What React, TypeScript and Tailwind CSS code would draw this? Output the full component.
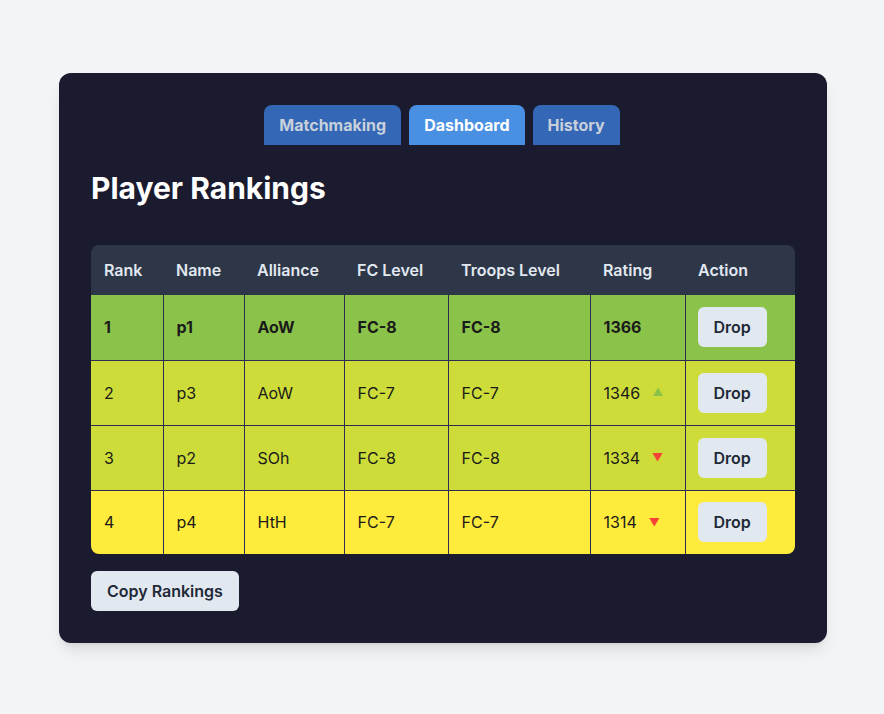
import React from "react";

type Row = {
  rank: number;
  name: string;
  alliance: string;
  fc: string;
  troops: string;
  rating: number;
  trend: "up" | "down" | null;
  bg: string;
  bold?: boolean;
};

const rows: Row[] = [
  { rank: 1, name: "p1", alliance: "AoW", fc: "FC-8", troops: "FC-8", rating: 1366, trend: null, bg: "bg-[#8bc34a]", bold: true },
  { rank: 2, name: "p3", alliance: "AoW", fc: "FC-7", troops: "FC-7", rating: 1346, trend: "up", bg: "bg-[#cddc39]" },
  { rank: 3, name: "p2", alliance: "SOh", fc: "FC-8", troops: "FC-8", rating: 1334, trend: "down", bg: "bg-[#cddc39]" },
  { rank: 4, name: "p4", alliance: "HtH", fc: "FC-7", troops: "FC-7", rating: 1314, trend: "down", bg: "bg-[#ffeb3b]" },
];

const cols = ["Rank", "Name", "Alliance", "FC Level", "Troops Level", "Rating", "Action"];
const widths = ["w-[72px]", "w-[81px]", "w-[100px]", "w-[104px]", "w-[142px]", "w-[95px]", "w-[110px]"];

export default function App() {
  return (
    <div className="min-h-[714px] w-full bg-[#f3f4f6] flex justify-center pt-[73px]" style={{ fontFamily: "Inter, 'Noto Sans', sans-serif" }}>
      <div className="ml-[2px] w-[768px] h-[570px] bg-[#1a1b2e] rounded-xl shadow-lg p-8 flex flex-col">
        <div className="flex justify-center gap-2 pr-[2px]">
          <button className="h-10 px-[15px] rounded-t-lg bg-[#3467b5] text-[#c8d0dc] font-bold text-base">Matchmaking</button>
          <button className="h-10 px-[15px] rounded-t-lg bg-[#4a90e2] text-white font-bold text-base">Dashboard</button>
          <button className="h-10 px-[15px] rounded-t-lg bg-[#3467b5] text-[#c8d0dc] font-bold text-base">History</button>
        </div>
        <h2 className="mt-[25px] text-[30px] leading-[36px] font-bold text-white">Player Rankings</h2>
        <div className="mt-[39px] rounded-lg overflow-hidden">
          <table className="w-[704px] border-collapse table-fixed text-base">
            <thead>
              <tr className="bg-[#2d3748] h-[50px]">
                {cols.map((c, i) => (
                  <th key={c} className={`${widths[i]} text-left font-semibold text-[#e2e8f0] pl-[13px] pr-3`}>{c}</th>
                ))}
              </tr>
            </thead>
            <tbody>
              {rows.map((r, idx) => {
                const bt = idx === 0 ? "" : "border-t";
                const td = `pl-[13px] pr-3 ${bt} border-r border-[#2c2c54] text-[#1a1a1a] ${r.bold ? "font-bold" : "font-normal"}`;
                return (
                  <tr key={r.rank} className={`${r.bg} ${idx === 3 ? "h-[64px]" : "h-[65px]"}`}>
                    <td className={td}>{r.rank}</td>
                    <td className={td}>{r.name}</td>
                    <td className={td}>{r.alliance}</td>
                    <td className={td}>{r.fc}</td>
                    <td className={td}>{r.troops}</td>
                    <td className={td}>
                      <span className="inline-flex items-center">
                        {r.rating}
                        {r.trend === "up" && <span className="ml-3 text-[11px] text-[#8bc34a]">▲</span>}
                        {r.trend === "down" && <span className="ml-3 text-[11px] text-[#f44336]">▼</span>}
                      </span>
                    </td>
                    <td className={`pl-3 pr-3 ${bt} border-[#2c2c54]`}>
                      <button className="h-10 px-4 rounded-md bg-[#e2e8f0] text-[#1f2937] font-semibold">Drop</button>
                    </td>
                  </tr>
                );
              })}
            </tbody>
          </table>
        </div>
        <div className="mt-[17px]">
          <button className="h-10 px-4 rounded-md bg-[#e2e8f0] text-[#1f2937] font-semibold">Copy Rankings</button>
        </div>
      </div>
    </div>
  );
}
